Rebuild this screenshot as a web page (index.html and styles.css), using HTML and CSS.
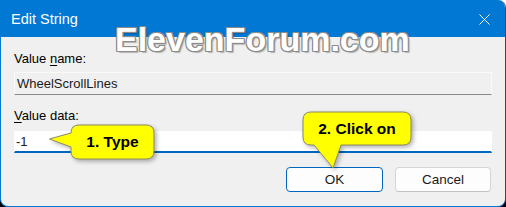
FILE: index.html
```html
<!DOCTYPE html>
<html lang="en">
<head>
  <meta charset="UTF-8">
  <title>Edit String</title>
  <link rel="stylesheet" href="styles.css">
</head>
<body>

<div class="ventana">
  <div class="barra-titulo">
    <span class="titulo">Edit String</span>
    <svg class="cerrar" width="11" height="11" viewBox="0 0 11 11">
      <path d="M0.5 0.5 L10.5 10.5 M10.5 0.5 L0.5 10.5" stroke="#ffffff" stroke-width="1" fill="none"/>
    </svg>
  </div>

  <div class="contenido">
    <div class="etiqueta">Value <u>n</u>ame:</div>
    <div class="campo campo-lectura">WheelScrollLines</div>

    <div class="etiqueta etiqueta-datos"><u>V</u>alue data:</div>
    <div class="campo campo-edicion">-1</div>

    <div class="botones">
      <button class="boton boton-ok">OK</button>
      <button class="boton">Cancel</button>
    </div>
  </div>

  <div class="marca">ElevenForum.com</div>

  <div class="globo globo-tipo">
    <svg class="globo-forma" width="106" height="36" viewBox="0 0 106 36">
      <path d="M30 1 H97 Q105 1 105 9 V27 Q105 35 97 35 H30 Q22 35 22 27 V23 L0.5 15 L22 9 Q22 1 30 1 Z"/>
    </svg>
    <span class="globo-texto">1. Type</span>
  </div>

  <div class="globo globo-clic">
    <svg class="globo-forma" width="111" height="58" viewBox="0 0 111 58">
      <path d="M9 1 H101 Q109 1 109 9 V26 Q109 34 101 34 H39 L31 57 L12 34 H9 Q1 34 1 26 V9 Q1 1 9 1 Z"/>
    </svg>
    <span class="globo-texto">2. Click on</span>
  </div>
</div>

</body>
</html>
```

FILE: styles.css
```css
html {
  background: linear-gradient(#ffffff 50%, #000000 50%);
}

body {
  margin: 0;
  padding: 0;
  font-family: "Liberation Sans", Arial, sans-serif;
}

.ventana {
  position: relative;
  box-sizing: border-box;
  width: 506px;
  height: 207px;
  background-color: #f0f0f0;
  border-left: 1px solid #0078d4;
  border-right: 1px solid #1d4f80;
  border-bottom: 1px solid #0078d4;
  border-radius: 0 8px 8px 8px;
  overflow: hidden;
}

.barra-titulo {
  height: 37px;
  background-color: #0078d4;
  display: flex;
  align-items: center;
  justify-content: space-between;
  padding: 1px 15px 0 10px;
  box-sizing: border-box;
}

.titulo {
  color: #ffffff;
  font-size: 14.5px;
}

.cerrar {
  display: block;
}

.contenido {
  padding: 14px 13px 0 13px;
}

.etiqueta {
  font-size: 13px;
  line-height: 16px;
  color: #000000;
}

.etiqueta u {
  text-underline-offset: 2px;
}

.etiqueta-datos {
  margin-top: 13px;
}

.campo {
  box-sizing: border-box;
  font-size: 13px;
  color: #1a1a1a;
  padding-left: 2px;
}

.campo-lectura {
  margin-top: 5px;
  height: 23px;
  line-height: 21px;
  border: 1px solid #fafafa;
  border-bottom-color: #8a8a8a;
}

.campo-edicion {
  margin-top: 7px;
  height: 22px;
  line-height: 19px;
  background-color: #ffffff;
  border: 1px solid #ffffff;
  border-bottom: 2px solid #0067c0;
  padding-left: 1px;
}

.botones {
  display: flex;
  justify-content: flex-end;
  gap: 12px;
  margin-top: 14px;
  padding-right: 1px;
}

.boton {
  box-sizing: border-box;
  width: 96px;
  height: 25px;
  font-family: "Liberation Sans", Arial, sans-serif;
  font-size: 13.5px;
  color: #1a1a1a;
  background-color: #fdfdfd;
  border: 1px solid #d4d4d4;
  border-bottom-color: #c2c2c2;
  border-radius: 4px;
  padding: 0;
}

.boton-ok {
  width: 97px;
  border-color: #0067c0;
}

.marca {
  position: absolute;
  left: 114px;
  top: 22px;
  font-size: 34px;
  line-height: 34px;
  font-weight: bold;
  color: #ffffff;
  letter-spacing: 0;
  text-shadow:
    1px 0 0 #8c8c8c, -1px 0 0 #8c8c8c, 0 1px 0 #8c8c8c, 0 -1px 0 #8c8c8c,
    1px 1px 0 #8c8c8c, -1px -1px 0 #8c8c8c, 1px -1px 0 #8c8c8c, -1px 1px 0 #8c8c8c,
    2px 2px 1px rgba(0, 0, 0, 0.25);
}

.globo {
  position: absolute;
}

.globo-forma {
  position: absolute;
  left: 0;
  top: 0;
  filter: drop-shadow(2px 2px 2px rgba(0, 0, 0, 0.3));
}

.globo-forma path {
  fill: #ffff00;
  stroke: #8a8a60;
  stroke-width: 1;
}

.globo-texto {
  position: absolute;
  font-size: 15.5px;
  font-weight: bold;
  color: #000000;
  text-align: center;
}

.globo-tipo {
  left: 48px;
  top: 124px;
  width: 106px;
  height: 36px;
}

.globo-tipo .globo-texto {
  left: 22px;
  top: 1px;
  width: 83px;
  line-height: 34px;
}

.globo-clic {
  left: 301px;
  top: 111px;
  width: 111px;
  height: 58px;
}

.globo-clic .globo-texto {
  left: 1px;
  top: 1px;
  width: 108px;
  line-height: 33px;
}
```
